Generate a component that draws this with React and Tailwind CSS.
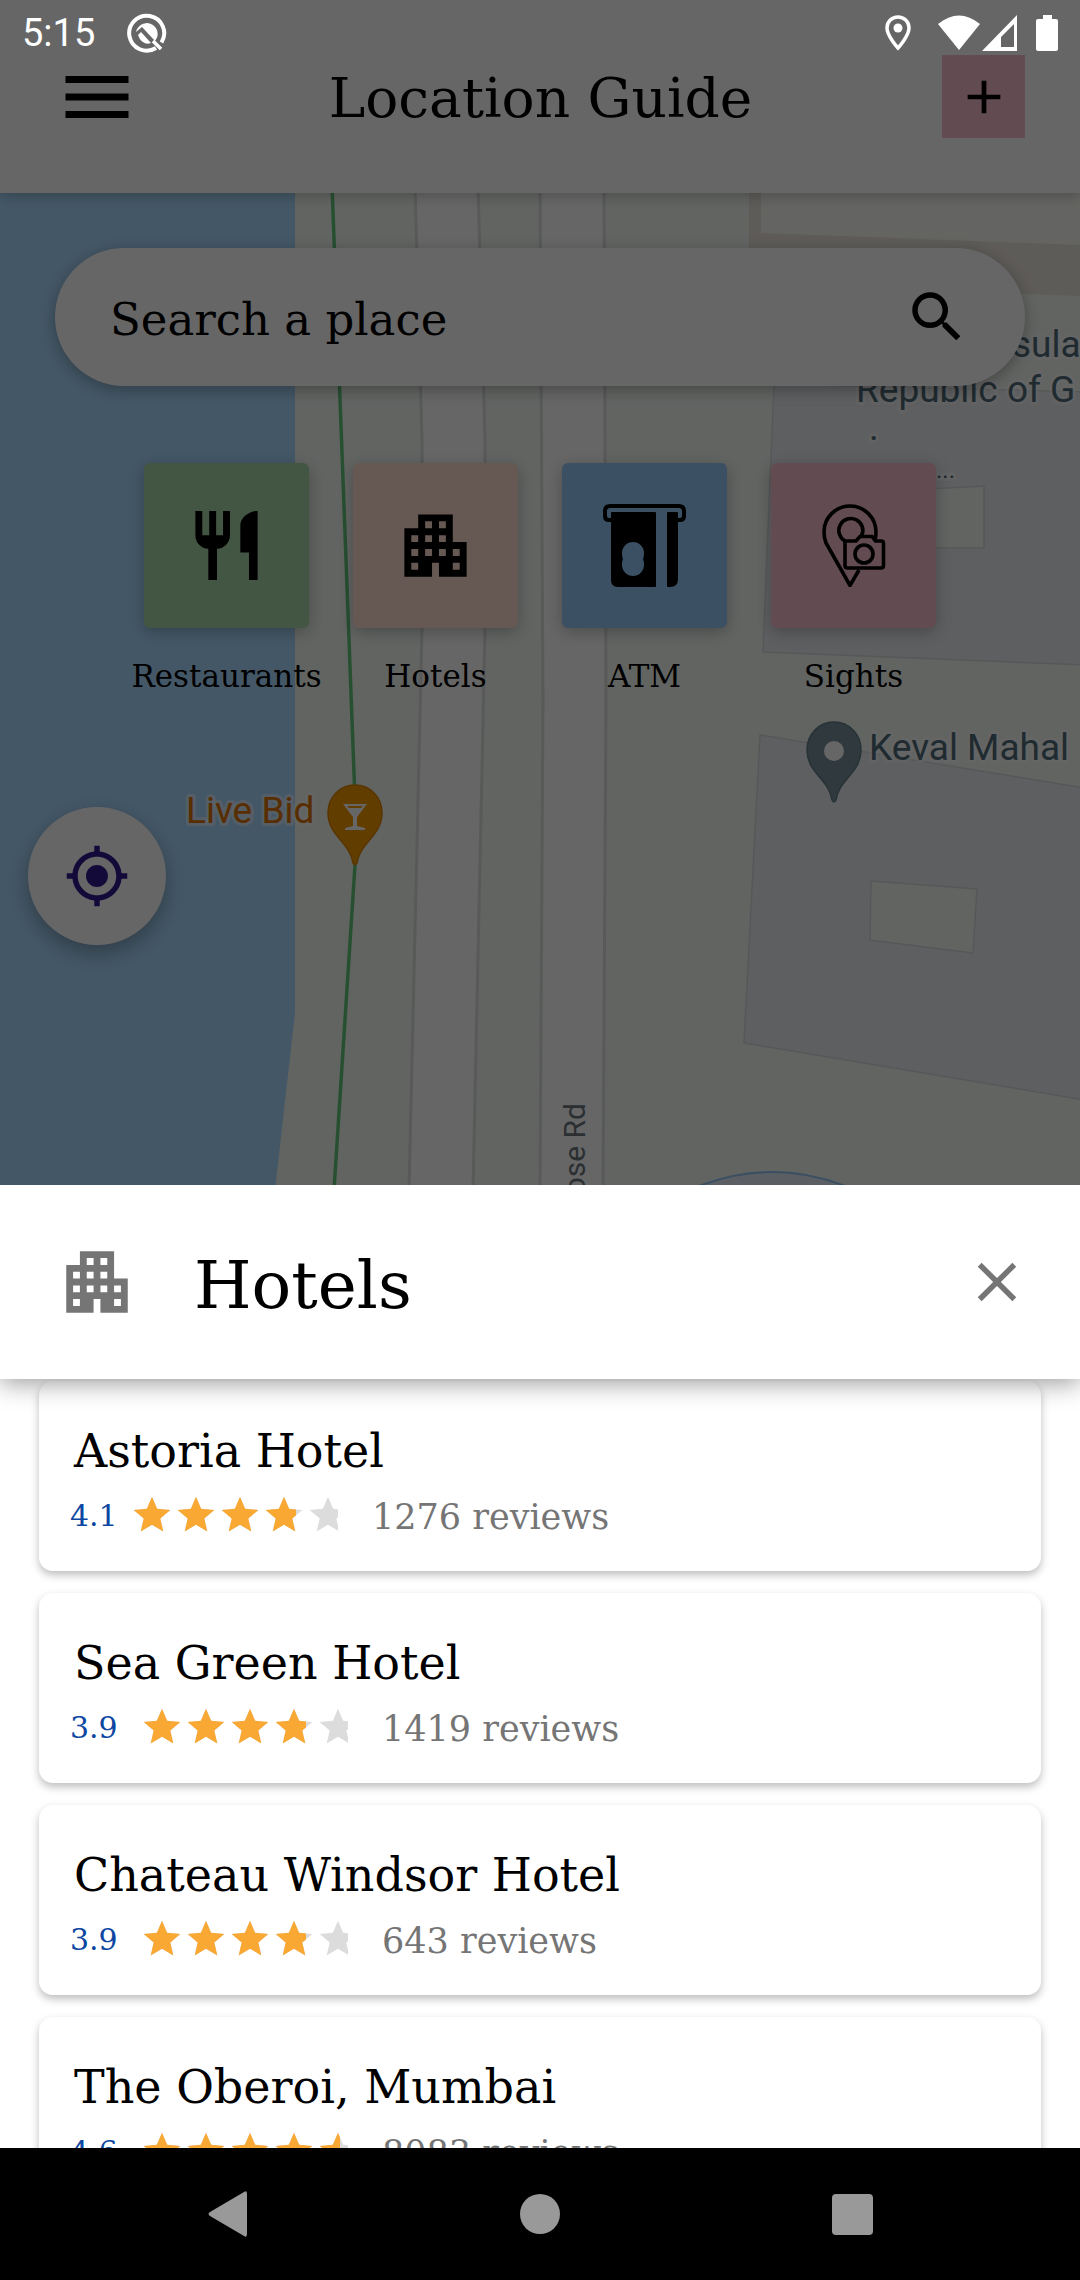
import React from "react";
import {
  MdAdd,
  MdApartment,
  MdClose,
  MdMenu,
  MdMyLocation,
  MdRestaurant,
  MdSearch,
  MdStar,
} from "react-icons/md";

const hotels = [
  { name: "Astoria Hotel", rating: "4.1", ratingWidth: "w-10", filled: 80, reviews: 1276 },
  { name: "Sea Green Hotel", rating: "3.9", ratingWidth: "w-[50px]", filled: 80, reviews: 1419 },
  { name: "Chateau Windsor Hotel", rating: "3.9", ratingWidth: "w-[50px]", filled: 80, reviews: 643 },
  { name: "The Oberoi, Mumbai", rating: "4.6", ratingWidth: "w-[50px]", filled: 96, reviews: 8083 },
];

function AtmIcon() {
  return (
    <svg viewBox="0 0 83 83" className="size-[83px]" aria-hidden="true">
      <path
        d="M9 16H6q-4 0-4-4V7q0-5 5-5h69q5 0 5 5v5q0 4-4 4h-3"
        fill="none"
        stroke="#000"
        strokeWidth="4"
      />
      <path
        fillRule="evenodd"
        d="M9 8h43q1 0 1 1v73q0 1-1 1H15q-7 0-7-7V9q0-1 1-1zM30 38a11 11 0 0 0-11 11q0 4 1 6q-1 2-1 6a11 11 0 0 0 22 0q0-4-1-6q1-2 1-6a11 11 0 0 0-11-11z"
      />
      <path d="M65 8h9q1 0 1 1v66q0 8-8 8h-2q-1 0-1-1V9q0-1 1-1z" />
    </svg>
  );
}

function SightsIcon() {
  return (
    <svg
      viewBox="0 0 83 83"
      className="size-[83px]"
      fill="none"
      stroke="#000"
      strokeWidth="3.6"
      aria-hidden="true"
    >
      <path d="M47 66L38 81.500L14 39Q12 34 12 28a26 26 0 0 1 52 0q0 4-1 8" />
      <path d="M33 37A12 12 0 1 1 49.500 32" />
      <path d="M34 37h10l4-4.500h12l3.500 4.500H69q2.500 0 2.500 2.500v22q0 2.500-2.500 2.500H35.500Q33 64 33 61.500V37z" />
      <circle cx="52" cy="50" r="9" />
    </svg>
  );
}

const categories = [
  { label: "Restaurants", color: "bg-[#a9d7a8]", icon: <MdRestaurant className="size-[83px]" /> },
  { label: "Hotels", color: "bg-[#ffdbcd]", icon: <MdApartment className="size-[83px]" /> },
  { label: "ATM", color: "bg-[#93c8f5]", icon: <AtmIcon /> },
  { label: "Sights", color: "bg-[#f5bbcb]", icon: <SightsIcon /> },
];

function MapCanvas() {
  return (
    <svg
      viewBox="0 193 1080 992"
      preserveAspectRatio="xMidYMin slice"
      className="absolute inset-0 h-full w-full font-[Roboto,sans-serif]"
      role="img"
      aria-label="Map"
    >
      <rect y="193" width="1080" height="1000" fill="#f4faf5" />
      <path d="M0 193H295V1013L275 1190H0z" fill="#aadaff" />

      <g stroke="#dcdedd" strokeWidth="3">
        <path d="M415 185L422 440V628L409 1190H473L485 628V440L478 185z" fill="#fff" />
        <path d="M540 185L543 700L540 1190H603L606 700L604 185z" fill="#fff" />
      </g>

      <path d="M749 193H1080V296L749 284z" fill="#ebe5de" />
      <path d="M761 193H1080V245L761 233z" fill="#fafaf4" />

      <g stroke="#d8dadd" strokeWidth="1.500">
        <path d="M774 384L1085 392V665L763 652z" fill="#ebedf1" />
        <path d="M910 490L984 486V548H910z" fill="#f4faf5" />
        <path d="M760 735L1085 788V1100L744 1043z" fill="#ebedf1" />
        <path d="M871 881L977 889L973 953L870 940z" fill="#f4faf5" />
      </g>

      <circle cx="772" cy="1368" r="196" fill="#e4edf8" stroke="#91c3f5" strokeWidth="2" />

      <path d="M332 185L355 800L355 865L334 1190" fill="none" stroke="#63c77c" strokeWidth="3.500" />

      <path
        d="M355 785c-15 0-27 12-27 28 0 23 22 29 25 50q2 4 4 0c3-21 25-27 25-50 0-16-12-28-27-28z"
        fill="#f59a00"
        stroke="#dd8500"
        strokeWidth="1.500"
      />
      <path
        d="M343 804h24l-10 13v9l8 2v2h-20v-2l8-2v-9zM347 806l2 2h12l2-2z"
        fill="#fff"
        fillRule="evenodd"
      />
      <path
        d="M834 722c-15 0-27 12-27 28 0 23 22 29 25 50q2 4 4 0c3-21 25-27 25-50 0-16-12-28-27-28z"
        fill="#78909c"
        stroke="#607d86"
        strokeWidth="1.500"
      />
      <circle cx="834" cy="751" r="10" fill="#fff" />

      <g fontSize="37" stroke="#fff" strokeOpacity="0.5" strokeWidth="6" strokeLinejoin="round" paintOrder="stroke">
        <text x="186" y="823" fill="#dc7400">Live Bid</text>
        <g fill="#4f6b78">
          <text x="869" y="760">Keval Mahal</text>
          <text x="1012" y="357">sula</text>
          <text x="856" y="402">Republic of G</text>
          <text x="869" y="440">.</text>
          <text x="936" y="478" fontSize="24">...</text>
        </g>
      </g>
      <text transform="translate(585 1103) rotate(-90)" textAnchor="end" fontSize="30" fill="#6b777d">
        ose Rd
      </text>
    </svg>
  );
}

function StatusBar() {
  return (
    <div className="absolute inset-x-0 top-0 flex h-[66px] items-center pr-[22px] pl-[22px] text-white">
      <span className="font-[Roboto,sans-serif] text-[38px] leading-none">5:15</span>
      <svg viewBox="0 0 40 40" className="ml-8 size-10" fill="none" aria-hidden="true">
        <path d="M29 35A17.500 17.500 0 1 1 34.500 29.500" stroke="#fff" strokeWidth="4" />
        <path d="M26 28L34 36" stroke="#fff" strokeWidth="3.500" />
        <path d="M9 19a11 11 0 0 1 21-2q2 6-2 11L15 14z" fill="#fff" />
        <path d="M11 22l3-3 10 11q-9 3-13-8z" fill="#fff" />
      </svg>
      <svg viewBox="0 0 26 36" className="ml-auto h-9 w-[26px]" fill="none" aria-hidden="true">
        <path
          d="M13 2C7 2 2 6.500 2 13c0 8 11 20 11 20s11-12 11-20C24 6.500 19 2 13 2z"
          stroke="#fff"
          strokeWidth="3.500"
        />
        <circle cx="13" cy="13" r="4.500" fill="#fff" />
      </svg>
      <svg viewBox="0 0 42 36" className="ml-[27px] h-9 w-[42px]" aria-hidden="true">
        <path d="M0 9Q21-8 42 9L21 35z" fill="#fff" />
      </svg>
      <svg viewBox="0 0 36 36" className="ml-[2px] size-9" aria-hidden="true">
        <path d="M35 0V36H0zM32 9L19 22V32H32z" fill="#fff" fillRule="evenodd" />
      </svg>
      <svg viewBox="0 0 22 36" className="ml-[18px] h-9 w-[22px]" aria-hidden="true">
        <path d="M7 0h9v4h4q2 0 2 2v28q0 2-2 2H2q-2 0-2-2V6q0-2 2-2h5z" fill="#fff" />
      </svg>
    </div>
  );
}

function StarRow() {
  return (
    <span className="flex w-[220px]">
      {[0, 1, 2, 3, 4].map((i) => (
        <MdStar key={i} className="size-11 shrink-0" />
      ))}
    </span>
  );
}

function HotelCard({ hotel }) {
  return (
    <li className="rounded-[14px] bg-white px-[31px] pt-[42px] pb-8 shadow-[0_4px_8px_rgba(0,0,0,0.26)]">
      <h2 className="pl-1 text-[46px] leading-[56px]">{hotel.name}</h2>
      <div className="mt-3 flex h-12 items-center gap-5 whitespace-nowrap">
        <span className={"shrink-0 text-[30px] text-[#0d47a1] " + hotel.ratingWidth}>{hotel.rating}</span>
        <span className="relative block w-[208px] shrink-0 overflow-hidden text-[#dcdcdc]">
          <StarRow />
          <span
            className="absolute inset-y-0 left-0 overflow-hidden text-[#f9a833]"
            style={{ width: hotel.filled + "%" }}
          >
            <StarRow />
          </span>
        </span>
        <span className="pt-1 pl-3.5 text-[35px] text-[#757575]">{hotel.reviews} reviews</span>
      </div>
    </li>
  );
}

export default function App() {
  return (
    <div className="flex h-screen flex-col overflow-hidden bg-white font-['DejaVu_Serif',serif] text-black">
      <div className="relative flex min-h-0 flex-[1185] flex-col overflow-hidden">
        <header className="z-10 flex h-[193px] shrink-0 items-center justify-between bg-white px-[55px] shadow-[0_4px_12px_rgba(0,0,0,0.2)]">
          <button aria-label="Menu">
            <MdMenu className="size-[84px]" />
          </button>
          <h1 className="pt-1 text-[55px] leading-none">Location Guide</h1>
          <button aria-label="Add" className="flex size-[83px] items-center justify-center bg-[#f5bbcb]">
            <MdAdd className="size-14" />
          </button>
        </header>

        <main className="relative min-h-0 flex-1">
          <MapCanvas />
          <div className="relative px-[55px] pt-[55px]">
            <label className="flex h-[138px] items-center rounded-full bg-white px-[55px] shadow-[0_4px_16px_rgba(0,0,0,0.3)]">
              <input
                type="text"
                aria-label="Search a place"
                placeholder="Search a place"
                className="min-w-0 flex-1 bg-transparent pt-1.5 text-[45px] outline-none placeholder:text-black"
              />
              <MdSearch className="size-[66px]" />
            </label>
          </div>
          <nav className="relative mt-[77px] flex justify-center gap-11">
            {categories.map((c) => (
              <button key={c.label} className="flex w-[165px] flex-col items-center gap-7">
                <span
                  className={
                    "flex size-[165px] items-center justify-center rounded-md shadow-[0_4px_16px_rgba(0,0,0,0.25)] " +
                    c.color
                  }
                >
                  {c.icon}
                </span>
                <span className="text-[31px] leading-10 whitespace-nowrap">{c.label}</span>
              </button>
            ))}
          </nav>
          <button
            aria-label="My location"
            className="relative mt-[111px] ml-7 flex size-[138px] items-center justify-center rounded-full bg-white text-[#311b92] shadow-[0_8px_20px_rgba(0,0,0,0.3)]"
          >
            <MdMyLocation className="size-[66px]" />
          </button>
        </main>

        <div className="absolute inset-0 z-20 bg-black/60" />
        <div className="absolute inset-x-0 top-0 z-30">
          <StatusBar />
        </div>
      </div>

      <section className="flex min-h-0 flex-[963] flex-col bg-white">
        <div className="z-10 flex h-[194px] shrink-0 items-center bg-white pr-[50px] pl-14 shadow-[0_4px_24px_rgba(0,0,0,0.4)] [clip-path:inset(0_0_-40px_0)]">
          <MdApartment className="size-[82px] text-[#757575]" />
          <h1 className="ml-14 flex-1 pt-2 text-[66px] leading-none">Hotels</h1>
          <button aria-label="Close">
            <MdClose className="size-[66px] text-[#757575]" />
          </button>
        </div>
        <ul className="flex min-h-0 flex-1 flex-col gap-[22px] overflow-y-auto px-[39px] pt-0.5 [scrollbar-width:none]">
          {hotels.map((h) => (
            <HotelCard key={h.name} hotel={h} />
          ))}
        </ul>
      </section>

      <nav className="z-10 grid h-[132px] shrink-0 grid-cols-3 place-items-center bg-black px-[72px] text-[#999]">
        <button aria-label="Back">
          <svg viewBox="0 0 40 46" className="h-[46px] w-10" fill="currentColor" aria-hidden="true">
            <path d="M36 1Q39-1 39 3V43Q39 47 36 45L2 25Q-1 23 2 21z" />
          </svg>
        </button>
        <button aria-label="Home" className="size-10 rounded-full bg-[#999]" />
        <button aria-label="Recent apps" className="size-[41px] rounded-[4px] bg-[#999]" />
      </nav>
    </div>
  );
}
